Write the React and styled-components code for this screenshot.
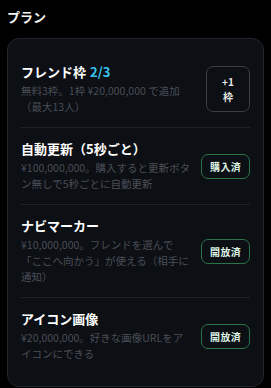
import React from 'react';
import styled, { createGlobalStyle } from 'styled-components';

const GlobalStyle = createGlobalStyle`
  body {
    margin: 0;
    background: #000;
    font-family: "Noto Sans CJK JP", "Noto Sans", sans-serif;
  }
`;

// description lines are split where the original card wraps them
const plans = [
  {
    title: 'フレンド枠',
    count: '2/3',
    desc: ['無料3枠。1枠 ¥20,000,000 で追加', '（最大13人）'],
    action: 'add',
  },
  {
    title: '自動更新（5秒ごと）',
    desc: ['¥100,000,000。購入すると更新ボタ', 'ン無しで5秒ごとに自動更新'],
    action: '購入済',
  },
  {
    title: 'ナビマーカー',
    desc: ['¥10,000,000。フレンドを選んで', '「ここへ向かう」が使える（相手に', '通知）'],
    action: '開放済',
  },
  {
    title: 'アイコン画像',
    desc: ['¥20,000,000。好きな画像URLをア', 'イコンにできる'],
    action: '開放済',
  },
];

const App = () => (
  <>
    <GlobalStyle />
    <Page>
      <Heading>プラン</Heading>
      <Card>
        {plans.map((plan) => (
          <Row key={plan.title}>
            <Info>
              <Title>
                {plan.title}
                {plan.count && <Count>{plan.count}</Count>}
              </Title>
              <Desc>
                {plan.desc.map((line) => (
                  <Line key={line}>{line}</Line>
                ))}
              </Desc>
            </Info>
            {plan.action === 'add' ? (
              <AddButton>
                +1
                <br />
                枠
              </AddButton>
            ) : (
              <DoneButton>{plan.action}</DoneButton>
            )}
          </Row>
        ))}
      </Card>
    </Page>
  </>
);

export default App;

const Page = styled.div`
  padding: 8px 7px 0;
`;

const Heading = styled.h2`
  margin: 0 0 12px;
  color: #f2f2f2;
  font-size: 13px;
  font-weight: 700;
  line-height: 18px;
`;

const Card = styled.div`
  background: #0c0f14;
  border: 1px solid #23262c;
  border-radius: 12px;
  padding: 12px 13px;
`;

const Row = styled.div`
  display: flex;
  align-items: center;
  justify-content: space-between;
  gap: 6px;
  padding: 12px 0;

  & + & {
    border-top: 1px solid #1f2227;
  }
`;

const Info = styled.div`
  flex: 1;
  max-width: 172px;
  min-width: 0;
`;

const Title = styled.div`
  color: #fff;
  font-size: 13px;
  font-weight: 700;
  line-height: 18px;
  margin-bottom: 2px;
  white-space: nowrap;
`;

const Count = styled.span`
  color: #38c3ee;
  margin-left: 4px;
`;

const Desc = styled.div`
  color: #4a4e56;
  font-size: 10.5px;
  line-height: 16px;
`;

const Line = styled.div`
  white-space: nowrap;
`;

const AddButton = styled.button`
  width: 44px;
  height: 46px;
  flex: none;
  background: transparent;
  border: 1px solid #3a3d43;
  border-radius: 7px;
  color: #e6e6e6;
  font-family: inherit;
  font-size: 10px;
  font-weight: 700;
  line-height: 15px;
  padding: 0;
`;

const DoneButton = styled.button`
  flex: none;
  height: 25px;
  padding: 0 8px;
  background: transparent;
  border: 1px solid #2c7448;
  border-radius: 7px;
  color: #dff5e6;
  font-family: inherit;
  font-size: 10px;
  font-weight: 600;
  letter-spacing: 0.3px;
`;
